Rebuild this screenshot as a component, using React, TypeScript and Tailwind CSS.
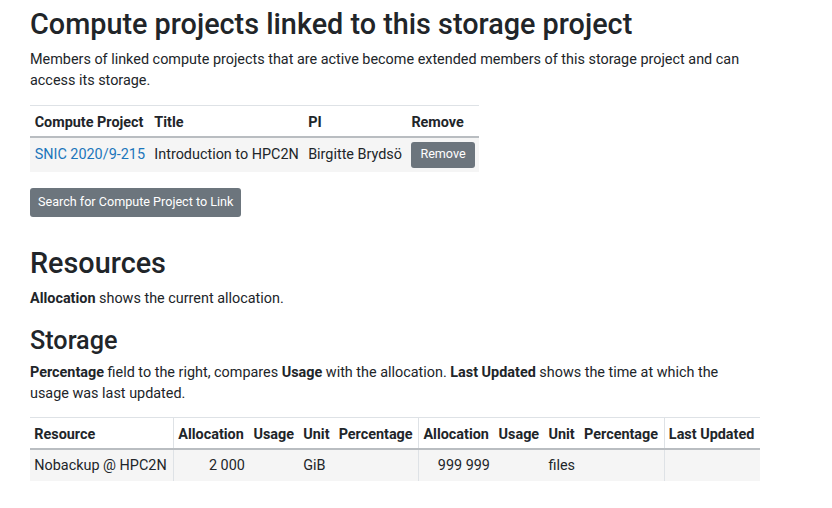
const font = { fontFamily: "Roboto, 'Liberation Sans', sans-serif" };

const th = "px-[4.7px] pt-[6px] pb-[2.5px] text-left font-bold whitespace-nowrap";
const td = "px-[4.7px] py-[4px] whitespace-nowrap";
const th2 = "px-[4.3px] pt-[6.5px] pb-[2.5px] text-left font-bold whitespace-nowrap";
const td2 = "px-[4.3px] py-[4.3px] whitespace-nowrap";

export default function App() {
  return (
    <main className="w-[790px] px-[30px] pt-[7px] text-[14.4px] leading-[21.6px] text-[#212529]" style={font}>
      <h1 className="text-[28.8px] font-medium leading-[34.5px] mb-[7px]">
        Compute projects linked to this storage project
      </h1>
      <p className="mb-[13px]">
        Members of linked compute projects that are active become extended members of this storage project and can
        access its storage.
      </p>

      <table className="border-collapse mb-[16px]">
        <thead>
          <tr className="border-t border-[#dee2e6] border-b-2 border-b-[#b9bdc1]">
            <th className={th}>Compute Project</th>
            <th className={th}>Title</th>
            <th className={th}>PI</th>
            <th className={th}>Remove</th>
          </tr>
        </thead>
        <tbody>
          <tr className="bg-[#f5f5f5]">
            <td className={`${td} text-[#1b75bb]`}>SNIC 2020/9-215</td>
            <td className={td}>Introduction to HPC2N</td>
            <td className={td}>Birgitte Brydsö</td>
            <td className={td}>
              <button className="rounded-[3px] bg-[#6c757d] px-[9px] py-[3.5px] text-[12.6px] leading-[18.9px] text-white">
                Remove
              </button>
            </td>
          </tr>
        </tbody>
      </table>

      <button className="rounded-[3px] bg-[#6c757d] px-[8px] py-[5px] text-[12.6px] leading-[18.9px] text-white">
        Search for Compute Project to Link
      </button>

      <h2 className="mt-[29px] text-[28.8px] font-medium leading-[34.5px] mb-[8px]">Resources</h2>
      <p className="mb-[16px]">
        <b>Allocation</b> shows the current allocation.
      </p>

      <h3 className="text-[25.2px] font-medium leading-[30px] mb-[6px]">Storage</h3>
      <p className="mb-[12px]">
        <b>Percentage</b> field to the right, compares <b>Usage</b> with the allocation. <b>Last Updated</b> shows the
        time at which the usage was last updated.
      </p>

      <table className="border-collapse w-[730px]">
        <thead>
          <tr className="border-t border-[#dee2e6] border-b-2 border-b-[#b9bdc1]">
            <th className={`${th2} border-r border-[#dee2e6]`}>Resource</th>
            <th className={th2}>Allocation</th>
            <th className={th2}>Usage</th>
            <th className={th2}>Unit</th>
            <th className={`${th2} border-r border-[#dee2e6]`}>Percentage</th>
            <th className={th2}>Allocation</th>
            <th className={th2}>Usage</th>
            <th className={th2}>Unit</th>
            <th className={`${th2} border-r border-[#dee2e6]`}>Percentage</th>
            <th className={th2}>Last Updated</th>
          </tr>
        </thead>
        <tbody>
          <tr className="bg-[#f5f5f5]">
            <td className={`${td2} border-r border-[#dee2e6]`}>Nobackup @ HPC2N</td>
            <td className={`${td2} text-right`}>2 000</td>
            <td className={td2}></td>
            <td className={td2}>GiB</td>
            <td className={`${td2} border-r border-[#dee2e6]`}></td>
            <td className={`${td2} text-right`}>999 999</td>
            <td className={td2}></td>
            <td className={td2}>files</td>
            <td className={`${td2} border-r border-[#dee2e6]`}></td>
            <td className={td2}></td>
          </tr>
        </tbody>
      </table>
    </main>
  );
}
